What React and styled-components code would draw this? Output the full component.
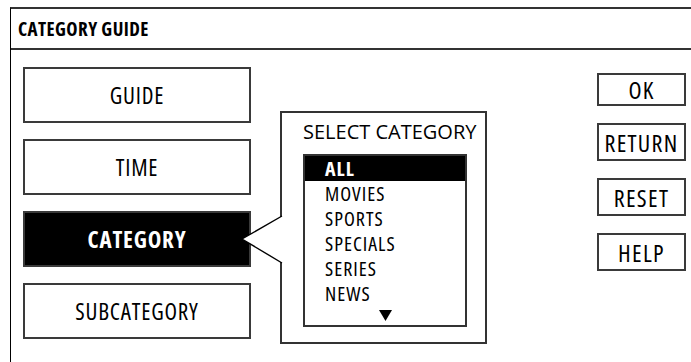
import React from 'react';
import styled, { createGlobalStyle } from 'styled-components';

const Global = createGlobalStyle`
  html, body { margin: 0; padding: 0; background: #fff; overflow: hidden; }
  body {
    font-family: "Open Sans", "Liberation Sans", sans-serif;
    font-stretch: 75%;
    color: #000;
  }
  * { box-sizing: border-box; }
`;

const Screen = styled.div`
  width: 691px;
  height: 362px;
  padding: 7px 0 0 10px;
`;

const Frame = styled.div`
  height: 100%;
  border-top: 2px solid #333;
  border-left: 1px solid #000;
  display: flex;
  flex-direction: column;
`;

const Header = styled.div`
  height: 41px;
  border-bottom: 2px solid #333;
  display: flex;
  align-items: center;
  padding-left: 7px;
  font-weight: 700;
  font-size: 19px;
  letter-spacing: 0.4px;
`;

const Body = styled.div`
  display: flex;
  align-items: flex-start;
  padding: 17px 0 0 12px;
`;

const LeftCol = styled.div`
  width: 228px;
  display: flex;
  flex-direction: column;
  gap: 16px;
`;

const ModeButton = styled.div`
  height: 56px;
  border: 2px solid #3a3a3a;
  background: ${p => (p.$active ? '#000' : '#fff')};
  color: ${p => (p.$active ? '#fff' : '#000')};
  font-weight: ${p => (p.$active ? 700 : 400)};
  font-size: 23px;
  letter-spacing: 0.8px;
  display: flex;
  align-items: center;
  justify-content: center;
`;

const Panel = styled.div`
  position: relative;
  margin: 44px 0 0 29px;
  width: 207px;
  height: 233px;
  border: 2px solid #333;
  padding: 0 0 0 21px;
`;

const PanelTitle = styled.div`
  height: 37px;
  line-height: 37px;
  font-size: 20px;
  font-stretch: 100%;
  white-space: nowrap;
`;

const List = styled.div`
  margin-top: 4px;
  width: 164px;
  height: 173px;
  border: 2px solid #333;
  display: flex;
  flex-direction: column;
`;

const Item = styled.div`
  height: 25px;
  line-height: 25px;
  padding-left: 20px;
  font-size: 20px;
  letter-spacing: 1px;
  background: ${p => (p.$selected ? '#000' : 'transparent')};
  color: ${p => (p.$selected ? '#fff' : '#000')};
  font-weight: ${p => (p.$selected ? 700 : 400)};
`;

const MoreRow = styled.div`
  height: 20px;
  display: flex;
  align-items: center;
  justify-content: center;
`;

const Pointer = styled.svg`
  position: absolute;
  left: -41px;
  top: 102px;
  overflow: visible;
`;

const RightCol = styled.div`
  margin: 6px 0 0 110px;
  width: 89px;
  display: flex;
  flex-direction: column;
  gap: 17px;
`;

const ActionButton = styled.div`
  height: ${p => p.$h}px;
  border: 2px solid #3a3a3a;
  font-size: 24px;
  letter-spacing: 1.3px;
  display: flex;
  align-items: center;
  justify-content: center;
  white-space: nowrap;
`;

const modes = ['GUIDE', 'TIME', 'CATEGORY', 'SUBCATEGORY'];
const categories = ['ALL', 'MOVIES', 'SPORTS', 'SPECIALS', 'SERIES', 'NEWS'];
const actions = [
  { label: 'OK', h: 33 },
  { label: 'RETURN', h: 38 },
  { label: 'RESET', h: 38 },
  { label: 'HELP', h: 38 },
];

export default function App() {
  return (
    <>
      <Global />
      <Screen>
        <Frame>
          <Header>CATEGORY GUIDE</Header>
          <Body>
            <LeftCol>
              {modes.map(m => (
                <ModeButton key={m} $active={m === 'CATEGORY'}>{m}</ModeButton>
              ))}
            </LeftCol>
            <Panel>
              <Pointer width="41" height="49" viewBox="0 0 41 49">
                <polygon points="41,1 1,24 41,48" fill="#fff" />
                <polyline points="41,1 1,24 41,48" fill="none" stroke="#000" strokeWidth="1.4" />
              </Pointer>
              <PanelTitle>SELECT CATEGORY</PanelTitle>
              <List>
                {categories.map(c => (
                  <Item key={c} $selected={c === 'ALL'}>{c}</Item>
                ))}
                <MoreRow>
                  <svg width="13" height="11" viewBox="0 0 13 11">
                    <polygon points="0,0 13,0 6.5,11" fill="#000" />
                  </svg>
                </MoreRow>
              </List>
            </Panel>
            <RightCol>
              {actions.map(a => (
                <ActionButton key={a.label} $h={a.h}>{a.label}</ActionButton>
              ))}
            </RightCol>
          </Body>
        </Frame>
      </Screen>
    </>
  );
}
